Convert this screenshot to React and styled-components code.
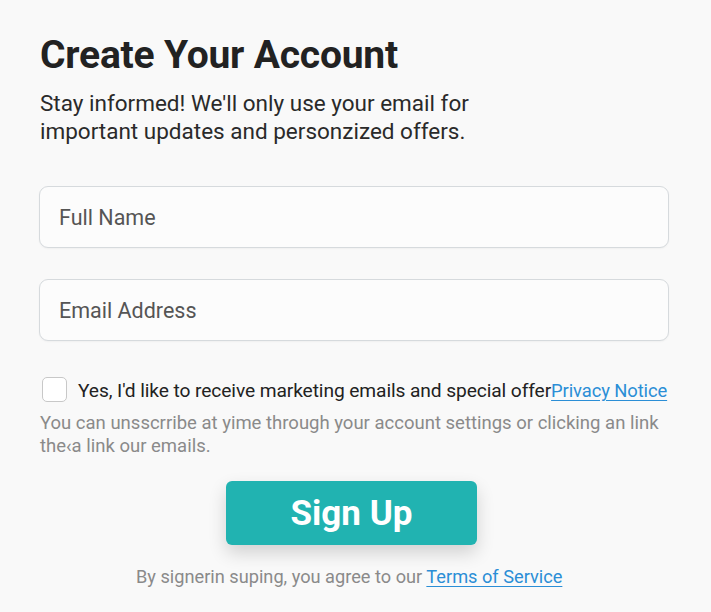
import React from 'react';
import styled, {createGlobalStyle} from 'styled-components';

const GlobalStyle = createGlobalStyle`
    html, body {
        margin: 0;
        padding: 0;
        background: #f9f9f9;
    }
    body {
        font-family: Roboto, 'Liberation Sans', Arial, sans-serif;
    }
`;

function App() {
    return (
        <>
            <GlobalStyle />
            <Page>
                <Title>Create Your Account</Title>
                <Intro>
                    Stay informed! We'll only use your email for<br />
                    important updates and personzized offers.
                </Intro>

                <Fields>
                    <Field type='text' placeholder='Full Name' />
                    <Field type='email' placeholder='Email Address' />
                </Fields>

                <ConsentRow>
                    <Checkbox type='checkbox' />
                    <ConsentText>
                        Yes, I'd like to receive marketing emails and special offer
                        <Link href='#'>Privacy Notice</Link>
                    </ConsentText>
                </ConsentRow>
                <Note>
                    You can unsscrribe at yime through your account settings or clicking an link
                    the‹a link our emails.
                </Note>

                <ButtonRow>
                    <SignUpButton type='button'>Sign Up</SignUpButton>
                </ButtonRow>

                <Footer>
                    By signerin suping, you agree to our <Link href='#' $small>Terms of Service</Link>
                </Footer>
            </Page>
        </>
    );
}

export default App;

const Page = styled.div`
    width: 711px;
    height: 612px;
    box-sizing: border-box;
    padding: 32px 42px 0 39px;
    display: flex;
    flex-direction: column;
    overflow: hidden;
`;

const Title = styled.h1`
    margin: 0 0 0 1px;
    font-size: 39px;
    font-weight: 700;
    line-height: 46px;
    color: #222;
    letter-spacing: -0.2px;
`;

const Intro = styled.p`
    margin: 11px 0 0 1px;
    font-size: 22.5px;
    line-height: 28px;
    color: #2a2a2a;
`;

const Fields = styled.div`
    display: flex;
    flex-direction: column;
    gap: 31px;
    margin-top: 41px;
`;

const Field = styled.input`
    height: 62px;
    box-sizing: border-box;
    border: 1.5px solid #d6dadd;
    border-radius: 9px;
    background: #fcfcfc;
    padding: 0 19px;
    font-family: inherit;
    font-size: 21.5px;
    color: #333;
    outline: none;
    box-shadow: 0 1px 2px rgba(0, 0, 0, 0.04);

    &::placeholder {
        color: #555;
    }
`;

const ConsentRow = styled.label`
    display: flex;
    align-items: center;
    gap: 11px;
    margin: 36px 0 0 3px;
    height: 25px;
`;

const Checkbox = styled.input`
    appearance: none;
    width: 25px;
    height: 25px;
    margin: 0;
    border: 1.5px solid #c8c8c8;
    border-radius: 5px;
    background: #fff;
    flex: none;
`;

const ConsentText = styled.span`
    font-size: 19.2px;
    line-height: 24px;
    color: #222;
    white-space: nowrap;
    letter-spacing: -0.1px;
    padding-top: 3px;
`;

const Link = styled.a`
    color: #2b8ed6;
    text-decoration: underline;
    text-underline-offset: 3px;
    font-size: ${p => (p.$small ? '18.2px' : '18.4px')};
`;

const Note = styled.p`
    margin: 10px 0 0 1px;
    font-size: 18.5px;
    line-height: 23px;
    color: #8a8a8a;
`;

const ButtonRow = styled.div`
    display: flex;
    margin-top: 23px;
    padding-left: 187px;
`;

const SignUpButton = styled.button`
    width: 251px;
    height: 64px;
    border: none;
    border-radius: 6px;
    background: #21b3b1;
    color: #fff;
    font-family: inherit;
    font-size: 35px;
    font-weight: 700;
    box-shadow: 0 8px 18px rgba(0, 0, 0, 0.16);
    cursor: pointer;
`;

const Footer = styled.p`
    margin: 21px 0 0 0;
    padding-left: 97px;
    font-size: 18.2px;
    line-height: 22px;
    color: #8a8a8a;
`;
